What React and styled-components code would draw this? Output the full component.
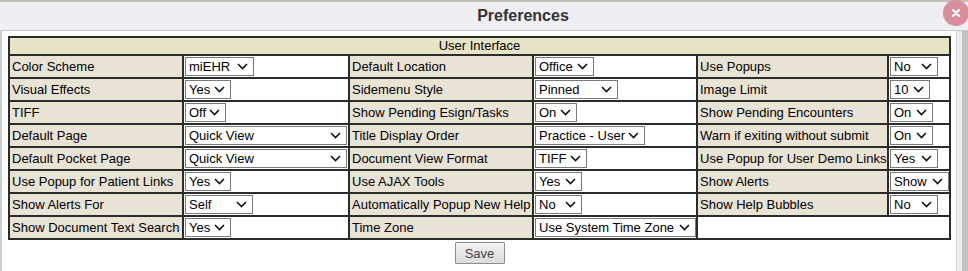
import styled, { createGlobalStyle } from 'styled-components';

const GlobalStyle = createGlobalStyle`
  html, body {
    margin: 0;
    padding: 0;
    background: #ffffff;
    overflow: hidden;
  }
  body {
    font-family: "Liberation Sans", Arial, sans-serif;
    font-size: 13px;
    color: #000;
  }
`;

const Window = styled.div`
  position: relative;
  width: 968px;
  height: 271px;
  display: flex;
  flex-direction: column;
  overflow: hidden;
`;

const TopStrip = styled.div`
  height: 2px;
  background: #c4bfb6;
  flex: none;
`;

const TitleBar = styled.div`
  height: 28px;
  flex: none;
  background: #efeef3;
  border-bottom: 1px solid #cacace;
  display: flex;
  align-items: center;
  justify-content: center;
`;

const Title = styled.h1`
  margin: 0 0 0 78px;
  font-size: 16px;
  font-weight: 700;
  color: #333;
`;

const CloseButton = styled.div`
  position: absolute;
  top: 0;
  left: 943px;
  width: 26px;
  height: 26px;
  border-radius: 50%;
  background: #d98f99;
  display: flex;
  align-items: center;
  justify-content: center;
`;

const Body = styled.div`
  flex: 1;
  display: flex;
`;

const Content = styled.div`
  width: 957px;
  box-sizing: border-box;
  border-left: 2px solid #cdcdd1;
  border-right: 1px solid #d9d9de;
  padding: 5px 0 0 6px;
  background: #fff;
`;

const Gutter = styled.div`
  flex: 1;
  display: flex;
`;

const GutterStripe = styled.div`
  width: ${(p) => p.w}px;
  background: ${(p) => p.bg};
`;

const Table = styled.table`
  width: 943px;
  box-sizing: border-box;
  table-layout: fixed;
  border-collapse: separate;
  border-spacing: 0;
  border: 1px solid #2b2b2b;
`;

const HeaderCell = styled.th`
  height: 18px;
  box-sizing: border-box;
  padding: 0;
  border: 1px solid #2b2b2b;
  background: #e7e3c7;
  font-weight: 400;
  font-size: 13px;
  line-height: 16px;
  text-align: center;
`;

const LabelCell = styled.td`
  box-sizing: border-box;
  padding: 1px 0 1px 2px;
  border: 1px solid #2b2b2b;
  background: #e8e3d5;
  line-height: 19px;
  white-space: nowrap;
  overflow: hidden;
  vertical-align: middle;
`;

const ValueCell = styled.td`
  box-sizing: border-box;
  padding: 1px;
  border: 1px solid #2b2b2b;
  background: #fff;
  line-height: 19px;
  vertical-align: middle;
`;

const SelectBox = styled.div`
  width: ${(p) => p.w}px;
  height: 19px;
  box-sizing: border-box;
  border: 1px solid #7a7a7a;
  background: #fff;
  display: flex;
  align-items: center;
  justify-content: space-between;
  padding: 0 5px 0 3px;
  font-size: 13px;
  line-height: 17px;
  white-space: nowrap;
`;

const Footer = styled.div`
  width: 943px;
  display: flex;
  justify-content: center;
  padding-top: 2px;
`;

const SaveButton = styled.button`
  width: 50px;
  height: 22px;
  padding: 0;
  border: 1px solid #8c8c8c;
  border-radius: 1px;
  background: linear-gradient(#f1f1f1, #dcdcdc);
  font-family: "Liberation Sans", Arial, sans-serif;
  font-size: 13px;
  color: #444;
`;

const Chevron = () => (
  <svg width="11" height="7" viewBox="0 0 11 7">
    <path d="M1 1 L5.5 5.5 L10 1" fill="none" stroke="#111" strokeWidth="1.6" />
  </svg>
);

const Select = ({ value, w }) => (
  <SelectBox w={w}>
    <span>{value}</span>
    <Chevron />
  </SelectBox>
);

const widths = [174, 166, 184, 164, 191, 62];

const rows = [
  [['Color Scheme', 'miEHR', 69], ['Default Location', 'Office', 59], ['Use Popups', 'No', 48]],
  [['Visual Effects', 'Yes', 46], ['Sidemenu Style', 'Pinned', 83], ['Image Limit', '10', 40]],
  [['TIFF', 'Off', 41], ['Show Pending Esign/Tasks', 'On', 42], ['Show Pending Encounters', 'On', 43]],
  [['Default Page', 'Quick View', 162], ['Title Display Order', 'Practice - User', 110], ['Warn if exiting without submit', 'On', 43]],
  [['Default Pocket Page', 'Quick View', 162], ['Document View Format', 'TIFF', 52], ['Use Popup for User Demo Links', 'Yes', 48]],
  [['Use Popup for Patient Links', 'Yes', 46], ['Use AJAX Tools', 'Yes', 47], ['Show Alerts', 'Show', 59]],
  [['Show Alerts For', 'Self', 68], ['Automatically Popup New Help', 'No', 47], ['Show Help Bubbles', 'No', 48]],
  [['Show Document Text Search', 'Yes', 46], ['Time Zone', 'Use System Time Zone', 161], null],
];

function App() {
  return (
    <Window>
      <GlobalStyle />
      <TopStrip />
      <TitleBar>
        <Title>Preferences</Title>
      </TitleBar>
      <CloseButton>
        <svg width="10" height="10" viewBox="0 0 10 10">
          <path d="M2 2 L8 8 M8 2 L2 8" stroke="#fff" strokeWidth="2.2" strokeLinecap="round" />
        </svg>
      </CloseButton>
      <Body>
        <Content>
          <Table>
            <colgroup>
              {widths.map((w, i) => (
                <col key={i} style={{ width: w }} />
              ))}
            </colgroup>
            <thead>
              <tr>
                <HeaderCell colSpan={6}>User Interface</HeaderCell>
              </tr>
            </thead>
            <tbody>
              {rows.map((row, r) => (
                <tr key={r}>
                  {row.map((item, c) =>
                    item ? (
                      [
                        <LabelCell key={`l${c}`}>{item[0]}</LabelCell>,
                        <ValueCell key={`v${c}`}>
                          <Select value={item[1]} w={item[2]} />
                        </ValueCell>,
                      ]
                    ) : (
                      <ValueCell key={`e${c}`} colSpan={2} />
                    )
                  )}
                </tr>
              ))}
            </tbody>
          </Table>
          <Footer>
            <SaveButton>Save</SaveButton>
          </Footer>
        </Content>
        <Gutter>
          <GutterStripe w={5} bg="#ebebf0" />
          <GutterStripe w={6} bg="#c2c2c4" />
        </Gutter>
      </Body>
    </Window>
  );
}

export default App;
